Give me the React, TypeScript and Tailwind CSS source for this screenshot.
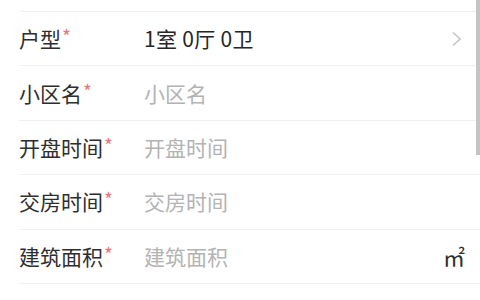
interface FieldRow {
    label: string;
    value?: string;
    placeholder?: string;
    suffix?: 'arrow' | 'area';
}

const rows: FieldRow[] = [
    { label: '户型', value: '1室 0厅 0卫', suffix: 'arrow' },
    { label: '小区名', placeholder: '小区名' },
    { label: '开盘时间', placeholder: '开盘时间' },
    { label: '交房时间', placeholder: '交房时间' },
    { label: '建筑面积', placeholder: '建筑面积', suffix: 'area' },
];

export default function App() {
    return (
        <div
            className="relative w-[480px] h-[300px] overflow-hidden bg-white text-[#2e2e2e]"
            style={{ fontFamily: '"Noto Sans CJK SC", "Noto Sans", sans-serif' }}
        >
            <div className="ml-[20px] h-[12px] border-b border-[#f0f0f0]" />
            {rows.map(row => (
                <div key={row.label} className="ml-[19px] h-[54.4px] border-b border-[#f0f0f0] flex items-center pr-[15px]">
                    <div className="w-[125px] shrink-0 flex items-start text-[21px] leading-none">
                        <span>{row.label}</span>
                        <span className="text-[#e8777a] text-[19px] leading-none -mt-[2px] ml-[1px]">*</span>
                    </div>
                    <div className="flex-1 text-[21px] leading-none">
                        {row.value ? (
                            <span className="text-[#262626] tracking-[0.3px]">{row.value}</span>
                        ) : (
                            <span className="text-[#b3b3b3]">{row.placeholder}</span>
                        )}
                    </div>
                    {row.suffix === 'arrow' && (
                        <svg width="12" height="16" viewBox="0 0 12 16" className="mr-[2px]">
                            <polyline points="2,1.5 9,8 2,14.5" fill="none" stroke="#c6c6c6" strokeWidth="1.6" />
                        </svg>
                    )}
                    {row.suffix === 'area' && (
                        <span className="text-[22px] leading-none text-[#2e2e2e]">㎡</span>
                    )}
                </div>
            ))}
            <div className="absolute right-0 top-0 w-[4px] h-[155px] bg-[#c4c4c4]" />
        </div>
    );
}
